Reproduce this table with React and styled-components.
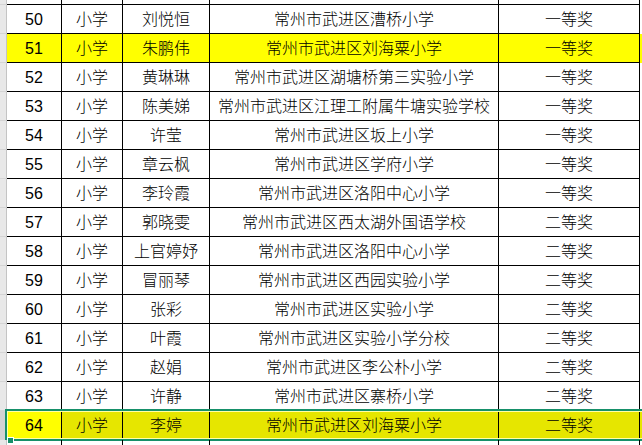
import React from "react";
import styled, { createGlobalStyle, css } from "styled-components";

const Global = createGlobalStyle`
  html, body { margin: 0; padding: 0; background: #ffffff; }
  body { overflow: hidden; }
`;

const COLS = "7px 55px 61px 87px 289px 141px 1fr";

const Sheet = styled.div`
  width: 642px;
  height: 445px;
  overflow: hidden;
  display: flex;
  flex-direction: column;
  font-family: "Liberation Sans", "Noto Sans CJK SC", sans-serif;
  font-size: 16px;
  font-weight: 300;
  color: #000;
  background: #fff;
`;

const Row = styled.div`
  display: grid;
  grid-template-columns: ${COLS};
  height: ${(p) => p.$h || 29}px;
  flex: none;
  position: relative;
  ${(p) =>
    p.$selected &&
    css`
      &::after {
        content: "";
        position: absolute;
        left: 5px;
        top: -2px;
        right: -10px;
        bottom: -1px;
        border: 2px solid #16906a;
        box-shadow: inset 0 0 0 1px #ffffa8;
        pointer-events: none;
      }
    `}
`;

const Header = styled.div`
  box-sizing: border-box;
  background: ${(p) => (p.$selected ? "#d2d2d2" : "#e8e8e8")};
  border-right: 1px solid #c4c4c4;
  border-bottom: 1px solid #d4d4d4;
`;

const Cell = styled.div`
  box-sizing: border-box;
  border-right: 1px solid #000;
  border-bottom: ${(p) => (p.$noBottom ? "none" : "1px solid #000")};
  display: flex;
  align-items: center;
  justify-content: center;
  white-space: nowrap;
  overflow: hidden;
  line-height: 1;
  padding-top: 1px;
  background: ${(p) =>
    p.$fill === "yellow" ? "#ffff00" : p.$fill === "sel" ? "#e6e600" : "transparent"};
`;

const Extra = styled.div`
  background: ${(p) =>
    p.$fill === "yellow" ? "#ffff00" : p.$fill === "sel" ? "#e6e600" : "transparent"};
`;

const Handle = styled.div`
  position: absolute;
  left: 7px;
  bottom: -4px;
  width: 5px;
  height: 5px;
  background: #16906a;
  border: 1px solid #fff;
  z-index: 2;
`;

const data = [
  [50, "刘悦恒", "常州市武进区漕桥小学", "一等奖"],
  [51, "朱鹏伟", "常州市武进区刘海粟小学", "一等奖", "yellow"],
  [52, "黄琳琳", "常州市武进区湖塘桥第三实验小学", "一等奖"],
  [53, "陈美娣", "常州市武进区江理工附属牛塘实验学校", "一等奖"],
  [54, "许莹", "常州市武进区坂上小学", "一等奖"],
  [55, "章云枫", "常州市武进区学府小学", "一等奖"],
  [56, "李玲霞", "常州市武进区洛阳中心小学", "一等奖"],
  [57, "郭晓雯", "常州市武进区西太湖外国语学校", "二等奖"],
  [58, "上官婷妤", "常州市武进区洛阳中心小学", "二等奖"],
  [59, "冒丽琴", "常州市武进区西园实验小学", "二等奖"],
  [60, "张彩", "常州市武进区实验小学", "二等奖"],
  [61, "叶霞", "常州市武进区实验小学分校", "二等奖"],
  [62, "赵娟", "常州市武进区李公朴小学", "二等奖"],
  [63, "许静", "常州市武进区寨桥小学", "二等奖"],
  [64, "李婷", "常州市武进区刘海粟小学", "二等奖", "selected"],
];

function EmptyRow({ h, noBottom }) {
  return (
    <Row $h={h}>
      <Header />
      {[0, 1, 2, 3, 4].map((i) => (
        <Cell key={i} $noBottom={noBottom} />
      ))}
      <Extra />
    </Row>
  );
}

export default function App() {
  return (
    <>
      <Global />
      <Sheet>
        <EmptyRow h={5} />
        {data.map(([no, name, school, award, mark]) => {
          const selected = mark === "selected";
          const fill = mark === "yellow" ? "yellow" : selected ? "sel" : null;
          return (
            <Row key={no} $selected={selected}>
              <Header $selected={selected} />
              <Cell $fill={mark ? "yellow" : null}>{no}</Cell>
              <Cell $fill={fill}>小学</Cell>
              <Cell $fill={fill}>{name}</Cell>
              <Cell $fill={fill}>{school}</Cell>
              <Cell $fill={fill}>{award}</Cell>
              <Extra $fill={fill} />
              {selected && <Handle />}
            </Row>
          );
        })}
        <EmptyRow h={6} noBottom />
      </Sheet>
    </>
  );
}
